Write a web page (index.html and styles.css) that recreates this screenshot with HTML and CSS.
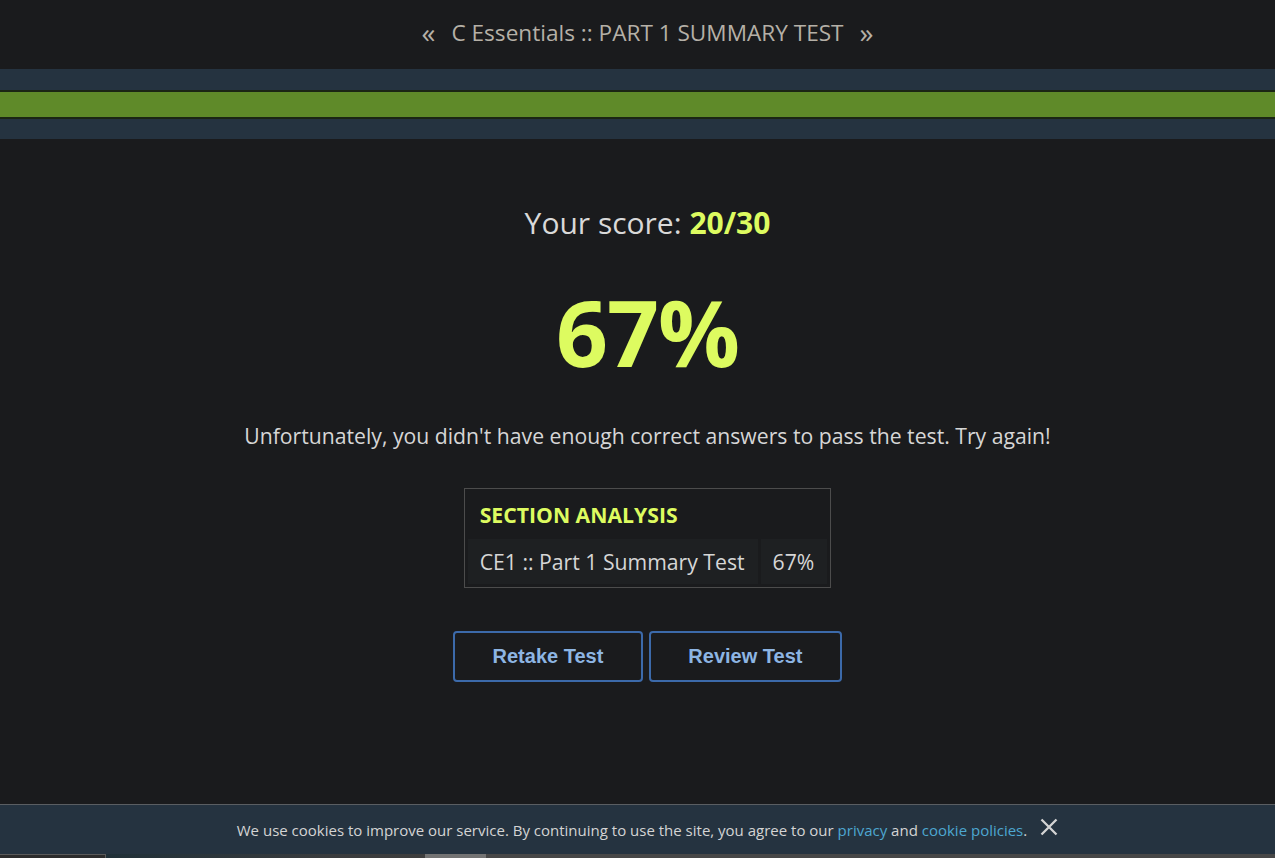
FILE: index.html
```html
<!DOCTYPE html>
<html lang="en">
<head>
<meta charset="utf-8">
<title>C Essentials :: PART 1 SUMMARY TEST</title>
<link rel="stylesheet" href="styles.css">
</head>
<body>
<header class="topbar">
  <a class="nav-arrow" href="#">&laquo;</a>
  <h1 class="title">C Essentials :: PART 1 SUMMARY TEST</h1>
  <a class="nav-arrow" href="#">&raquo;</a>
</header>
<div class="progress">
  <div class="progress-fill"></div>
</div>
<main class="result">
  <p class="score">Your score: <strong>20/30</strong></p>
  <p class="percent">67%</p>
  <p class="message">Unfortunately, you didn't have enough correct answers to pass the test. Try again!</p>
  <table class="analysis">
    <thead>
      <tr><th colspan="2">SECTION ANALYSIS</th></tr>
    </thead>
    <tbody>
      <tr><td class="sec-name">CE1 :: Part 1 Summary Test</td><td class="sec-val">67%</td></tr>
    </tbody>
  </table>
  <div class="actions">
    <button class="btn">Retake Test</button>
    <button class="btn">Review Test</button>
  </div>
</main>
<div class="cookie">
  <div class="cookie-inner">
    <span class="cookie-text">We use cookies to improve our service. By continuing to use the site, you agree to our <a href="#">privacy</a> and <a href="#">cookie policies</a>.</span>
    <button class="cookie-close" aria-label="Close">
      <svg width="18" height="18" viewBox="0 0 18 18"><path d="M1.5 1.5 L16.5 16.5 M16.5 1.5 L1.5 16.5" stroke="#d4d4d4" stroke-width="2.3" fill="none"/></svg>
    </button>
  </div>
  <div class="cookie-strip">
    <div class="strip-left"></div>
    <div class="strip-grad"></div>
    <div class="strip-thumb"></div>
    <div class="strip-rest"></div>
  </div>
</div>
</body>
</html>
```
FILE: styles.css
```css
html, body {
  margin: 0;
  padding: 0;
  background: #1a1b1d;
  height: 100%;
}
body {
  font-family: "Open Sans", "Noto Sans", sans-serif;
  color: #d6d6d6;
}
.topbar {
  height: 69px;
  display: flex;
  align-items: center;
  justify-content: center;
  gap: 16px;
  padding-left: 20px;
  box-sizing: border-box;
  color: #b5b0a7;
}
.title {
  margin: 0;
  font-size: 22.6px;
  font-weight: 400;
  color: #b5b0a7;
  padding-bottom: 4px;
}
.nav-arrow {
  color: #b5b0a7;
  text-decoration: none;
  font-size: 28px;
  line-height: 1;
  padding-bottom: 6px;
}
.progress {
  background: #253340;
  padding: 21px 0 20px;
}
.progress-fill {
  height: 25px;
  background: #5f8a29;
  border-top: 2px solid #1b2614;
  border-bottom: 2px solid #1b2614;
}
.result {
  display: flex;
  flex-direction: column;
  align-items: center;
  padding-top: 64px;
  padding-left: 20px;
}
.score {
  margin: 0;
  font-size: 30px;
  line-height: 40px;
  color: #d9d9d9;
}
.score strong {
  color: #ddfb60;
  font-weight: 700;
}
.percent {
  margin: 34px 0 0;
  font-size: 91px;
  line-height: 110px;
  font-weight: 700;
  color: #ddfb60;
  letter-spacing: -1px;
}
.message {
  margin: 35px 0 0;
  font-size: 21.2px;
  line-height: 28px;
  color: #d6d6d6;
}
.analysis {
  margin-top: 38px;
  border: 1px solid #4c4c4c;
  border-collapse: separate;
  border-spacing: 3px;
  background: #1a1b1d;
}
.analysis th {
  text-align: left;
  font-size: 21.2px;
  font-weight: 700;
  color: #ddfb60;
  padding: 8px 12px 7px;
  line-height: 29px;
}
.analysis td {
  background: #1e2022;
  font-size: 21.2px;
  line-height: 29px;
  color: #d6d6d6;
  padding: 8px 13px 8px 12px;
}
.sec-val {
  padding: 8px 12px 8px 13px;
}
.actions {
  margin-top: 43px;
  display: flex;
  gap: 6px;
}
.btn {
  font-family: "Liberation Sans", Arial, sans-serif;
  font-weight: 700;
  font-size: 20px;
  color: #8db5e3;
  background: #1a1b1d;
  border: 2px solid #3c6aaa;
  border-radius: 4px;
  height: 51px;
  padding: 0 37.5px;
  cursor: pointer;
}
.cookie {
  position: fixed;
  left: 0;
  right: 0;
  bottom: 0;
  background: #253340;
  border-top: 1px solid #5a5e62;
}
.cookie-inner {
  height: 49px;
  display: flex;
  align-items: center;
  justify-content: center;
  gap: 13px;
  padding-left: 20px;
}
.cookie-text {
  font-size: 15px;
  color: #d4d4d4;
}
.cookie-text a {
  color: #4da7d1;
  text-decoration: none;
}
.cookie-close {
  background: none;
  border: 0;
  padding: 0;
  display: flex;
  margin-bottom: 6px;
  cursor: pointer;
}
.cookie-strip {
  height: 4px;
  display: flex;
}
.strip-left {
  width: 106px;
  background: #2c2c2c;
  border-top: 1px solid #5a5a5a;
  border-right: 1px solid #5a5a5a;
  box-sizing: border-box;
}
.strip-grad {
  width: 319px;
  background: linear-gradient(to right, #203038, #3a3c3e 70%, #3e3e3e);
}
.strip-thumb {
  width: 61px;
  background: #737373;
}
.strip-rest {
  flex: 1;
  background: #474747;
}
```
